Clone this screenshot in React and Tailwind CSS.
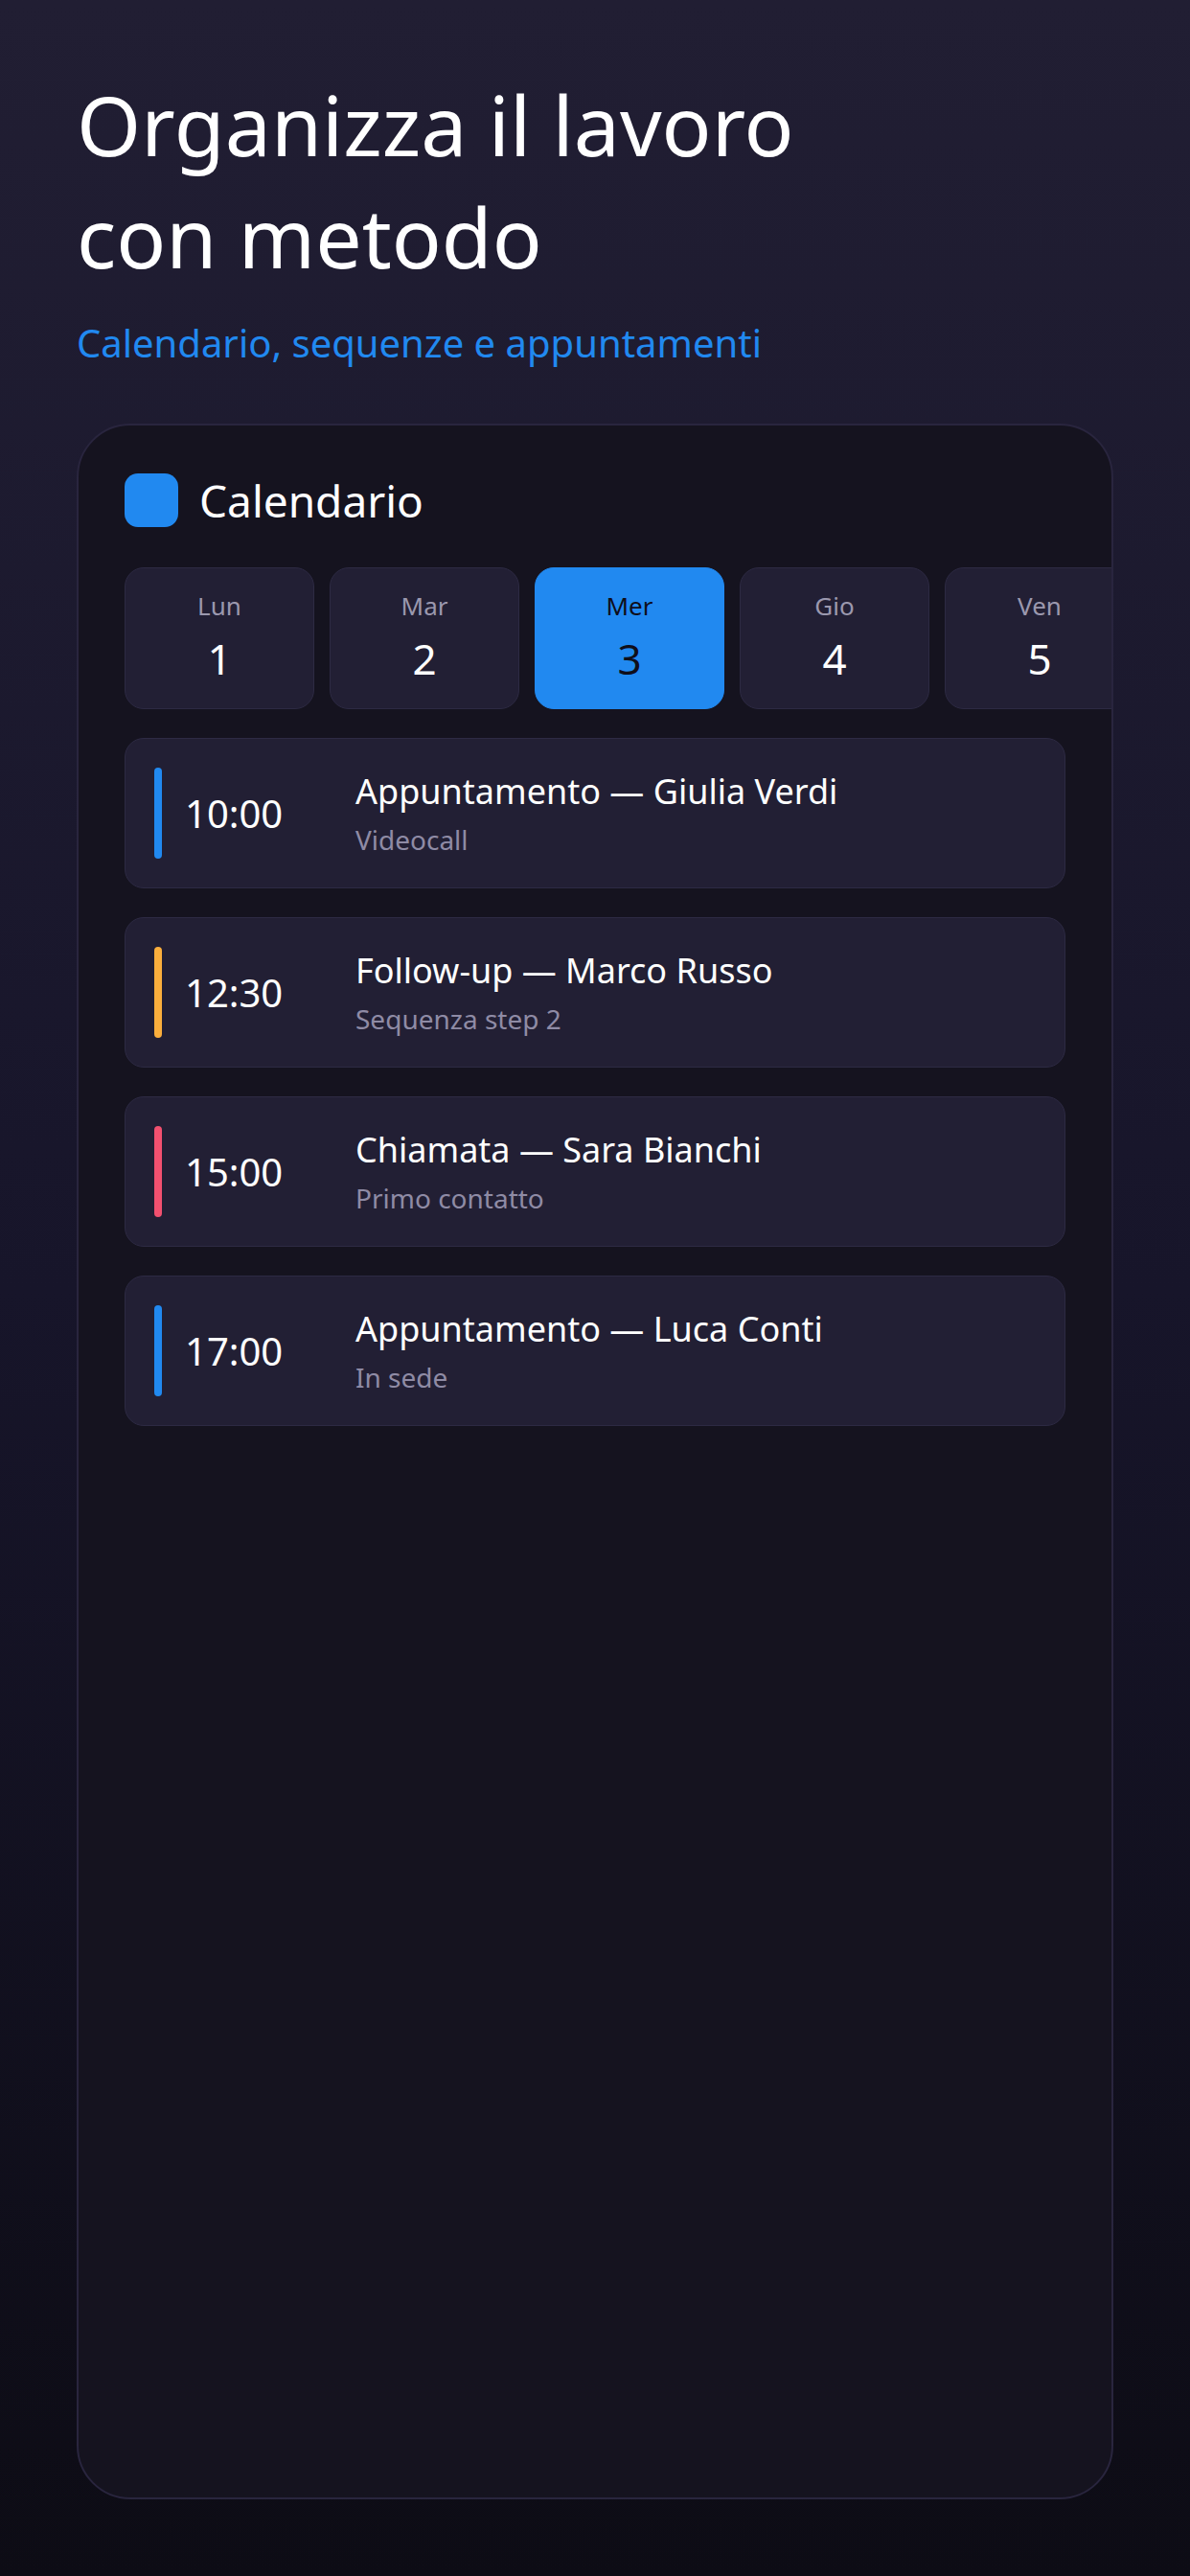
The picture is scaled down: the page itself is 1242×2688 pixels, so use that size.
const DAYS = [
  { label: "Lun", num: 1 },
  { label: "Mar", num: 2 },
  { label: "Mer", num: 3, active: true },
  { label: "Gio", num: 4 },
  { label: "Ven", num: 5 },
];

const EVENTS = [
  { time: "10:00", title: "Appuntamento — Giulia Verdi", sub: "Videocall", bar: "bg-[#2189f0]" },
  { time: "12:30", title: "Follow-up — Marco Russo", sub: "Sequenza step 2", bar: "bg-[#fbae3c]" },
  { time: "15:00", title: "Chiamata — Sara Bianchi", sub: "Primo contatto", bar: "bg-[#f2506f]" },
  { time: "17:00", title: "Appuntamento — Luca Conti", sub: "In sede", bar: "bg-[#2189f0]" },
];

export default function App() {
  return (
    <div
      className="min-h-screen flex flex-col px-[80px] pt-[71px] pb-[80px] bg-gradient-to-b from-[#211e33] via-[#17152a] to-[#0d0c15] text-white"
      style={{ fontFamily: '"Noto Sans", "Open Sans", sans-serif' }}
    >
      {/* Hero */}
      <h1 className="text-[86px] leading-[117px] font-normal">
        Organizza il lavoro
        <br />
        con metodo
      </h1>
      <p className="mt-[26px] text-[40px] leading-[54px] text-[#2189f0]">
        Calendario, sequenze e appuntamenti
      </p>

      {/* Calendar card */}
      <div className="mt-[57px] flex-1 rounded-[56px] border-2 border-[#29253e] bg-[#15131f] overflow-hidden px-[48px] pt-[50px]">
        <div className="flex items-center gap-[22px] mb-[42px]">
          <div className="w-[56px] h-[56px] rounded-[14px] bg-[#2189f0]" />
          <span className="text-[46px] leading-[56px]">Calendario</span>
        </div>

        <div className="flex gap-[16px]">
          {DAYS.map((d) => (
            <DayTab key={d.num} {...d} />
          ))}
        </div>

        <div className="mt-[30px] flex flex-col gap-[30px]">
          {EVENTS.map((e) => (
            <EventRow key={e.time} {...e} />
          ))}
        </div>
      </div>
    </div>
  );
}

function DayTab({ label, num, active }) {
  return (
    <div
      className={`shrink-0 w-[198px] h-[148px] rounded-[20px] border flex flex-col items-center justify-center gap-[7px] ${
        active ? "bg-[#2189f0] border-[#2189f0] text-[#0f0e1a]" : "bg-[#221f34] border-[#2d2a43]"
      }`}
    >
      <span className={`text-[26px] leading-[35px] ${active ? "text-[#0f0e1a]" : "text-[#9b98ae]"}`}>{label}</span>
      <span className={`text-[44px] leading-[60px] ${active ? "text-[#0f0e1a]" : "text-white"}`}>{num}</span>
    </div>
  );
}

function EventRow({ time, title, sub, bar }) {
  return (
    <div className="flex items-stretch rounded-[20px] border border-[#2d2a43] bg-[#221f34] pl-[30px] pr-[30px] py-[30px]">
      <div className={`w-[8px] rounded-full ${bar}`} />
      <div className="ml-[24px] w-[178px] shrink-0 flex items-center text-[40px] leading-[54px]">{time}</div>
      <div className="flex flex-col">
        <span className="text-[36px] leading-[49px]">{title}</span>
        <span className="mt-[7px] text-[28px] leading-[39px] text-[#8f8ba5]">{sub}</span>
      </div>
    </div>
  );
}
